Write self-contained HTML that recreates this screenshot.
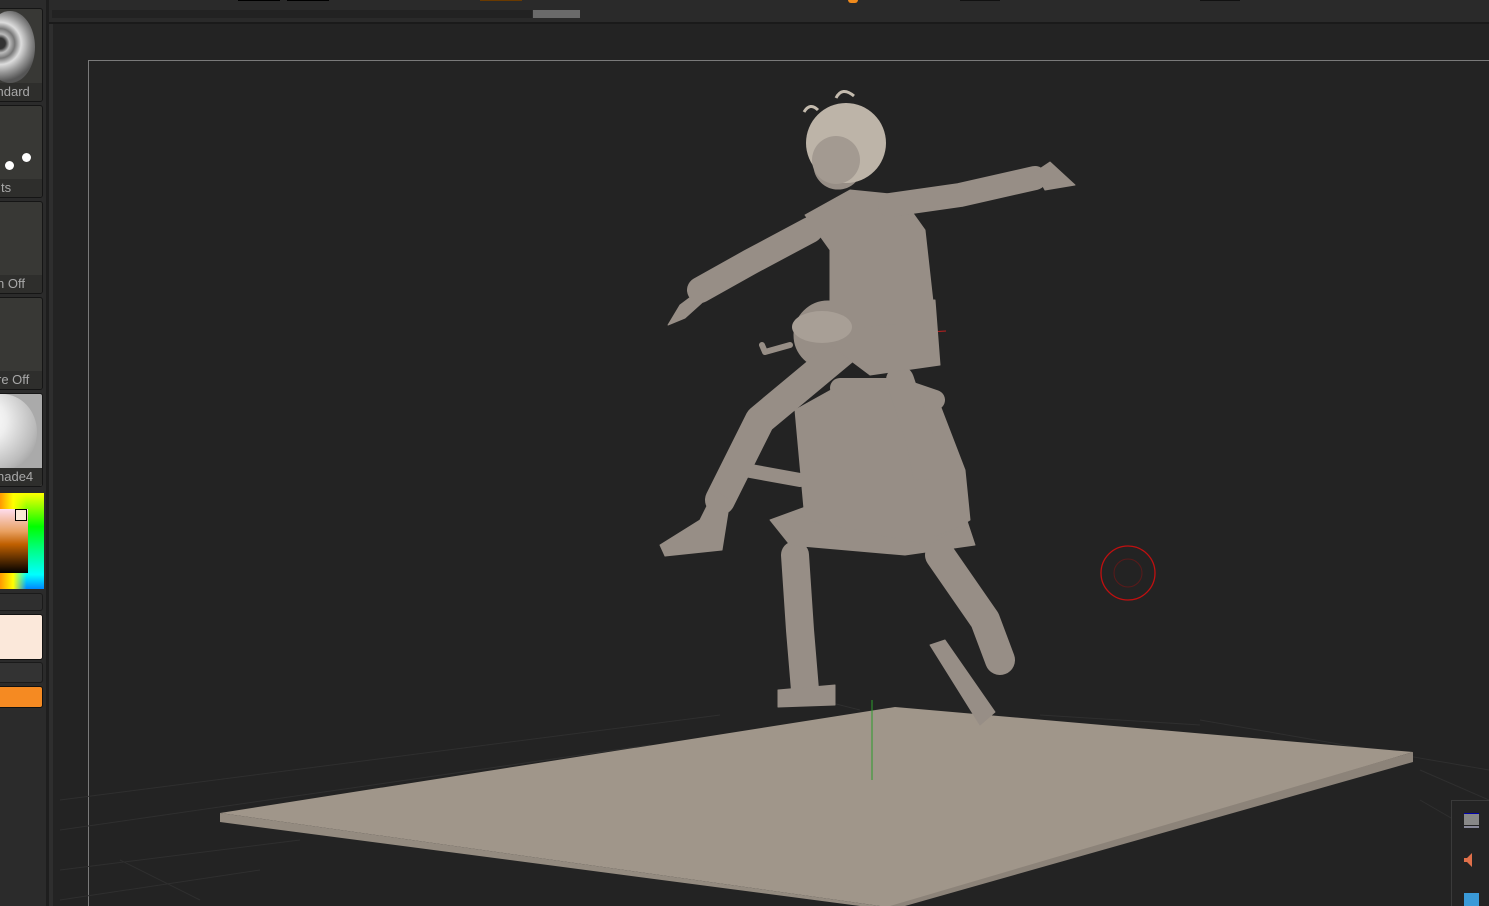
<!DOCTYPE html>
<html><head><meta charset="utf-8"><style>
html,body{margin:0;padding:0;background:#262626;width:1489px;height:906px;overflow:hidden;font-family:"Liberation Sans","DejaVu Sans",sans-serif}
*{box-sizing:border-box}
.abs{position:absolute}
.btn{position:absolute;left:-4px;width:47px;background:#383835;border:1px solid #151515;border-radius:3px;overflow:hidden}
.lbl{position:absolute;left:0;right:0;bottom:0;height:18px;background:#2e2e2c;color:#a8a8a8;font-size:13px;line-height:18px;white-space:nowrap;text-align:left;padding-left:2px}
</style></head><body>
<!-- top bar -->
<div class="abs" style="left:0;top:0;width:1489px;height:22px;background:#2a2a2a"></div>
<div class="abs" style="left:52px;top:10px;width:480px;height:8px;background:#222"></div>
<div class="abs" style="left:533px;top:10px;width:47px;height:8px;background:#6a6a6a"></div>
<div class="abs" style="left:238px;top:0;width:42px;height:1px;background:#000"></div>
<div class="abs" style="left:287px;top:0;width:42px;height:1px;background:#000"></div>
<div class="abs" style="left:480px;top:0;width:42px;height:1px;background:#6a3a00"></div>
<div class="abs" style="left:848px;top:0;width:10px;height:3px;background:#f08a1c;border-radius:0 0 3px 3px"></div>
<div class="abs" style="left:960px;top:0;width:40px;height:1px;background:#111"></div>
<div class="abs" style="left:1200px;top:0;width:40px;height:1px;background:#111"></div>
<div class="abs" style="left:0;top:22px;width:1489px;height:2px;background:#1a1a1a"></div>
<!-- left column -->
<div class="abs" style="left:0;top:0;width:46px;height:906px;background:#2b2b2b"></div>
<div class="abs" style="left:46px;top:0;width:3px;height:906px;background:#1e1e1e"></div>
<div class="abs" style="left:49px;top:24px;width:4px;height:882px;background:#2e2e2e"></div>
<div class="btn" style="top:8px;height:94px"><div class="abs" style="left:-12px;top:2px;width:50px;height:72px;border-radius:50%;background:radial-gradient(circle at 30% 45%,#333 0 10%,#bbb 18%,#777 28%,#ddd 40%,#999 55%,#555 72%)"></div><div class="lbl" style="text-indent:-20px;padding-left:0">Standard</div></div>
<div class="btn" style="top:105px;height:93px"><div class="abs" style="left:8px;top:55px;width:9px;height:9px;border-radius:50%;background:#fff"></div><div class="abs" style="left:25px;top:47px;width:9px;height:9px;border-radius:50%;background:#fff"></div><div class="lbl" style="padding-left:4px">ts</div></div>
<div class="btn" style="top:201px;height:93px"><div class="lbl" style="padding-left:0">n Off</div></div>
<div class="btn" style="top:297px;height:93px"><div class="lbl" style="padding-left:0">re Off</div></div>
<div class="btn" style="top:393px;height:94px;background:#aaa"><div class="abs" style="left:-30px;top:0;width:70px;height:76px;border-radius:50%;background:radial-gradient(circle at 25% 35%,#fff 0,#eee 30%,#bbb 70%,#888 100%)"></div><div class="lbl" style="padding-left:0">nade4</div></div>
<div class="abs" style="left:0;top:493px;width:44px;height:96px;background:linear-gradient(180deg,#ff0 0,#0f0 35%,#0f8 60%,#0ff 85%,#08f 100%)"></div>
<div class="abs" style="left:0;top:493px;width:44px;height:96px;background:linear-gradient(90deg,#f90 0,#ff0 30%,rgba(0,0,0,0) 60%)"></div>
<div class="abs" style="left:0;top:509px;width:28px;height:64px;background:linear-gradient(180deg,#fde 0,#e8a060 35%,#c06000 55%,#000 100%)"></div>
<div class="abs" style="left:15px;top:509px;width:12px;height:12px;border:1.5px solid #000;background:#fbe8d8"></div>
<div class="abs" style="left:-4px;top:593px;width:47px;height:18px;background:#2f2f2f;border:1px solid #1a1a1a;border-radius:3px"></div>
<div class="abs" style="left:-4px;top:614px;width:47px;height:46px;background:#fbe8da;border:1px solid #111;border-radius:3px"></div>
<div class="abs" style="left:-4px;top:662px;width:47px;height:21px;background:#333;border:1px solid #1a1a1a;border-radius:3px"></div>
<div class="abs" style="left:-4px;top:686px;width:47px;height:22px;background:#f58a22;border:1px solid #111;border-radius:3px"></div>
<!-- viewport -->
<div class="abs" style="left:53px;top:24px;width:1436px;height:882px;background:#232323"></div>
<svg class="abs" style="left:0;top:0;display:block" width="1489" height="906">
<path d="M88.5 906 V60.5 H1489" fill="none" stroke="#7a7a7a"/>
<g stroke="#2f2f2f" stroke-width="1">
<line x1="60" y1="800" x2="720" y2="715"/><line x1="60" y1="830" x2="650" y2="745"/>
<line x1="60" y1="870" x2="300" y2="840"/><line x1="1200" y1="720" x2="1489" y2="770"/>
<line x1="1420" y1="770" x2="1489" y2="800"/><line x1="1420" y1="800" x2="1489" y2="840"/>
<line x1="120" y1="860" x2="200" y2="900"/><line x1="820" y1="700" x2="860" y2="710"/>
<line x1="60" y1="900" x2="260" y2="870"/><line x1="1040" y1="715" x2="1200" y2="725"/>
</g>
<polygon points="220,813 895,707 1413,752 900,906 880,906" fill="#a0968a"/>
<polygon points="220,813 880,906 860,906 220,822" fill="#948b80"/>
<polygon points="1413,752 1413,762 905,906 890,906" fill="#8c8379"/>
<line x1="872" y1="700" x2="872" y2="780" stroke="#2c9c2c"/>
<line x1="928" y1="332" x2="946" y2="331" stroke="#c02020"/>
<g fill="#978e86" stroke="#978e86" stroke-linecap="round" stroke-linejoin="round">
<polyline points="795,555 800,630 805,690" fill="none" stroke-width="28"/>
<polygon points="778,690 835,685 835,705 778,707"/>
<polyline points="940,555 985,620 1000,660" fill="none" stroke-width="30"/>
<polygon points="930,645 945,640 995,712 980,725"/>
<polygon points="770,520 830,498 960,500 975,545 905,555 790,545"/>
<polygon points="795,410 840,385 935,392 965,470 970,520 930,545 805,520"/>
<polyline points="800,480 745,470" fill="none" stroke-width="14"/>
<circle cx="745" cy="467" r="8"/>
<circle cx="828" cy="335" r="34"/>
<polyline points="790,345 765,352 762,345" fill="none" stroke-width="6"/>
<polyline points="870,330 900,322 912,308" fill="none" stroke-width="8"/>
<polyline points="840,388 900,388 935,400" fill="none" stroke-width="20"/>
<polyline points="850,345 760,420 720,500" fill="none" stroke-width="30"/>
<polygon points="660,545 700,520 715,490 730,500 722,550 665,556"/>
<polyline points="900,380 920,440 930,490" fill="none" stroke-width="28"/>
<polygon points="912,480 940,478 965,525 930,538"/>
<polygon points="835,300 935,300 940,365 870,375 830,345"/>
<polygon points="805,215 850,190 900,195 925,230 935,320 830,330 830,250"/>
<polyline points="810,230 750,262 700,290" fill="none" stroke-width="26"/>
<polygon points="700,290 680,305 668,325 685,318 705,300"/>
<polyline points="890,205 960,195 1035,178" fill="none" stroke-width="24"/>
<polygon points="1035,172 1050,162 1075,185 1045,190"/>
<circle cx="838" cy="165" r="24"/>
</g>
<circle cx="846" cy="143" r="40" fill="#bdb4a8"/>
<ellipse cx="836" cy="160" rx="24" ry="24" fill="#a39a91"/>
<path d="M804 112 q6 -10 14 -2 M836 98 q6 -12 18 -2" stroke="#c4bbae" stroke-width="3" fill="none"/>
<ellipse cx="822" cy="327" rx="30" ry="16" fill="#a89f96"/>
<circle cx="1128" cy="573" r="27" fill="none" stroke="#c01010" stroke-width="1.3"/>
<circle cx="1128" cy="573" r="14" fill="none" stroke="#5a1a1a" stroke-width="1"/>
</svg>
<!-- bottom-right panel -->
<div class="abs" style="left:1451px;top:800px;width:38px;height:106px;background:#242424;border-left:1px solid #3a3a3a;border-top:1px solid #3a3a3a"></div>
<div class="abs" style="left:1464px;top:813px;width:15px;height:12px;background:#888;border-top:1px solid #00a"></div>
<div class="abs" style="left:1464px;top:826px;width:15px;height:2px;background:#889"></div>
<svg class="abs" style="left:1462px;top:852px;display:block" width="14" height="16"><polygon points="2,6 5,6 10,1 10,15 5,10 2,10" fill="#e0704a"/></svg>
<div class="abs" style="left:1464px;top:893px;width:15px;height:13px;background:#3a9ad8"></div>
</body></html>
